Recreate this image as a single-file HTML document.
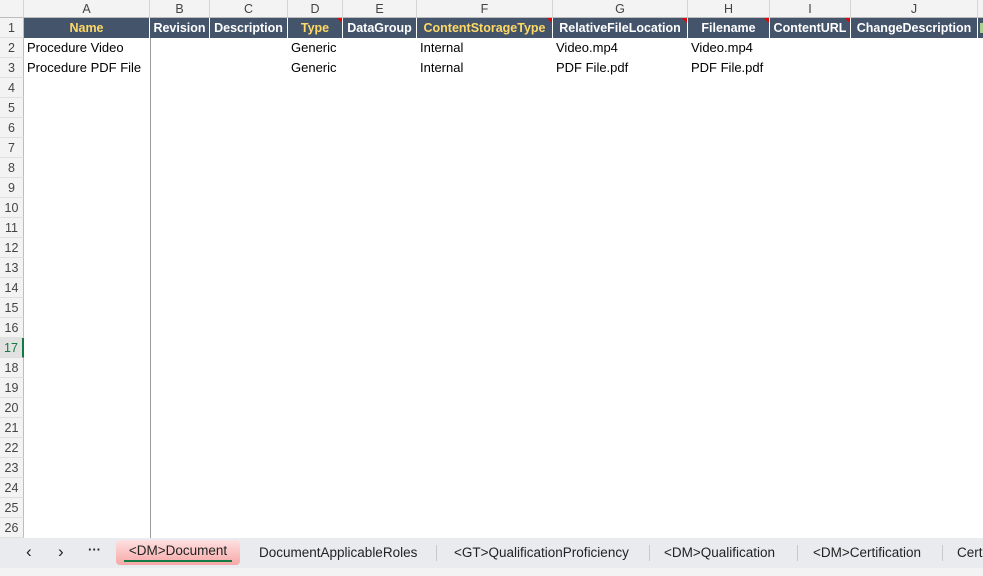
<!DOCTYPE html>
<html><head><style>
*{margin:0;padding:0;box-sizing:border-box}
body{width:983px;height:576px;overflow:hidden;background:#fff;font-family:"Liberation Sans",sans-serif;position:relative}
.ch{position:absolute;top:0;height:18px;background:#f3f3f3;border-right:1px solid #d4d4d4;border-bottom:1px solid #bdbdbd;font-size:12.5px;color:#444;text-align:center;line-height:18px}
.hd{position:absolute;top:18px;height:20px;background:#44546a;border-right:1px solid #fff;font-size:12.5px;font-weight:bold;color:#fff;text-align:center;line-height:20px;white-space:nowrap;overflow:hidden}
.y{color:#ffd966}
.tri{position:absolute;right:0;top:0;width:0;height:0;border-left:5px solid transparent;border-top:5px solid #e00}
.rh{position:absolute;left:0;width:24px;height:20px;background:#f3f3f3;border-bottom:1px solid #e0e0e0;border-right:1px solid #bdbdbd;font-size:12.5px;color:#444;text-align:center;line-height:20px}
.c{position:absolute;font-size:13px;color:#000;line-height:20px;white-space:nowrap}
.t{position:absolute;top:7px;font-size:13.5px}
.s{position:absolute;top:7px;width:1px;height:16px;background:#c8c8c8}
</style></head><body>
<div class="ch" style="left:0;width:24px"></div>
<div class="ch" style="left:24px;width:126px">A</div>
<div class="ch" style="left:150px;width:60px">B</div>
<div class="ch" style="left:210px;width:78px">C</div>
<div class="ch" style="left:288px;width:55px">D</div>
<div class="ch" style="left:343px;width:74px">E</div>
<div class="ch" style="left:417px;width:136px">F</div>
<div class="ch" style="left:553px;width:135px">G</div>
<div class="ch" style="left:688px;width:82px">H</div>
<div class="ch" style="left:770px;width:81px">I</div>
<div class="ch" style="left:851px;width:127px">J</div>
<div class="ch" style="left:978px;width:10px"></div>

<div class="hd y" style="left:24px;width:126px">Name</div>
<div class="hd" style="left:150px;width:60px">Revision</div>
<div class="hd" style="left:210px;width:78px">Description</div>
<div class="hd y" style="left:288px;width:55px">Type<span class="tri"></span></div>
<div class="hd" style="left:343px;width:74px">DataGroup</div>
<div class="hd y" style="left:417px;width:136px">ContentStorageType<span class="tri"></span></div>
<div class="hd" style="left:553px;width:135px">RelativeFileLocation<span class="tri"></span></div>
<div class="hd" style="left:688px;width:82px">Filename<span class="tri"></span></div>
<div class="hd" style="left:770px;width:81px">ContentURL<span class="tri"></span></div>
<div class="hd" style="left:851px;width:127px">ChangeDescription</div>
<div class="hd" style="left:978px;width:10px;background:#44546a"><span style="position:absolute;left:2px;top:5px;width:3px;height:10px;background:#a9d08e"></span></div>

<div style="position:absolute;left:150px;top:38px;width:1px;height:500px;background:#9a9a9a"></div>

<div class="rh" style="top:18px">1</div>
<div class="rh" style="top:38px">2</div>
<div class="rh" style="top:58px">3</div>
<div class="rh" style="top:78px">4</div>
<div class="rh" style="top:98px">5</div>
<div class="rh" style="top:118px">6</div>
<div class="rh" style="top:138px">7</div>
<div class="rh" style="top:158px">8</div>
<div class="rh" style="top:178px">9</div>
<div class="rh" style="top:198px">10</div>
<div class="rh" style="top:218px">11</div>
<div class="rh" style="top:238px">12</div>
<div class="rh" style="top:258px">13</div>
<div class="rh" style="top:278px">14</div>
<div class="rh" style="top:298px">15</div>
<div class="rh" style="top:318px">16</div>
<div class="rh" style="top:338px;background:#e1e1e1;color:#107c41;border-right:2px solid #107c41">17</div>
<div class="rh" style="top:358px">18</div>
<div class="rh" style="top:378px">19</div>
<div class="rh" style="top:398px">20</div>
<div class="rh" style="top:418px">21</div>
<div class="rh" style="top:438px">22</div>
<div class="rh" style="top:458px">23</div>
<div class="rh" style="top:478px">24</div>
<div class="rh" style="top:498px">25</div>
<div class="rh" style="top:518px">26</div>

<div class="c" style="left:27px;top:38px">Procedure Video</div>
<div class="c" style="left:27px;top:58px">Procedure PDF File</div>
<div class="c" style="left:291px;top:38px">Generic</div>
<div class="c" style="left:291px;top:58px">Generic</div>
<div class="c" style="left:420px;top:38px">Internal</div>
<div class="c" style="left:420px;top:58px">Internal</div>
<div class="c" style="left:556px;top:38px">Video.mp4</div>
<div class="c" style="left:556px;top:58px">PDF File.pdf</div>
<div class="c" style="left:691px;top:38px">Video.mp4</div>
<div class="c" style="left:691px;top:58px">PDF File.pdf</div>

<div style="position:absolute;left:0;top:538px;width:983px;height:30px;background:#e9ebee;color:#222">
<span style="position:absolute;left:26px;top:4px;font-size:17px">&#8249;</span>
<span style="position:absolute;left:58px;top:4px;font-size:17px">&#8250;</span>
<span style="position:absolute;left:88px;top:4px;font-weight:bold;font-size:13px">&middot;&middot;&middot;</span>
<div style="position:absolute;left:116px;top:2px;width:124px;height:25px;background:linear-gradient(#fde0e0,#f7a7a7);border-radius:4px;text-align:center;line-height:22px;font-size:13.5px">&lt;DM&gt;Document<div style="position:absolute;left:8px;right:8px;bottom:3px;height:2px;background:#107c41"></div></div>
<span class="t" style="left:259px">DocumentApplicableRoles</span>
<span class="s" style="left:436px"></span>
<span class="t" style="left:454px">&lt;GT&gt;QualificationProficiency</span>
<span class="s" style="left:649px"></span>
<span class="t" style="left:664px">&lt;DM&gt;Qualification</span>
<span class="s" style="left:797px"></span>
<span class="t" style="left:813px">&lt;DM&gt;Certification</span>
<span class="s" style="left:942px"></span>
<span class="t" style="left:957px">Cert</span>
</div>
<div style="position:absolute;left:0;top:568px;width:983px;height:8px;background:#f3f3f3"></div>
</body></html>
